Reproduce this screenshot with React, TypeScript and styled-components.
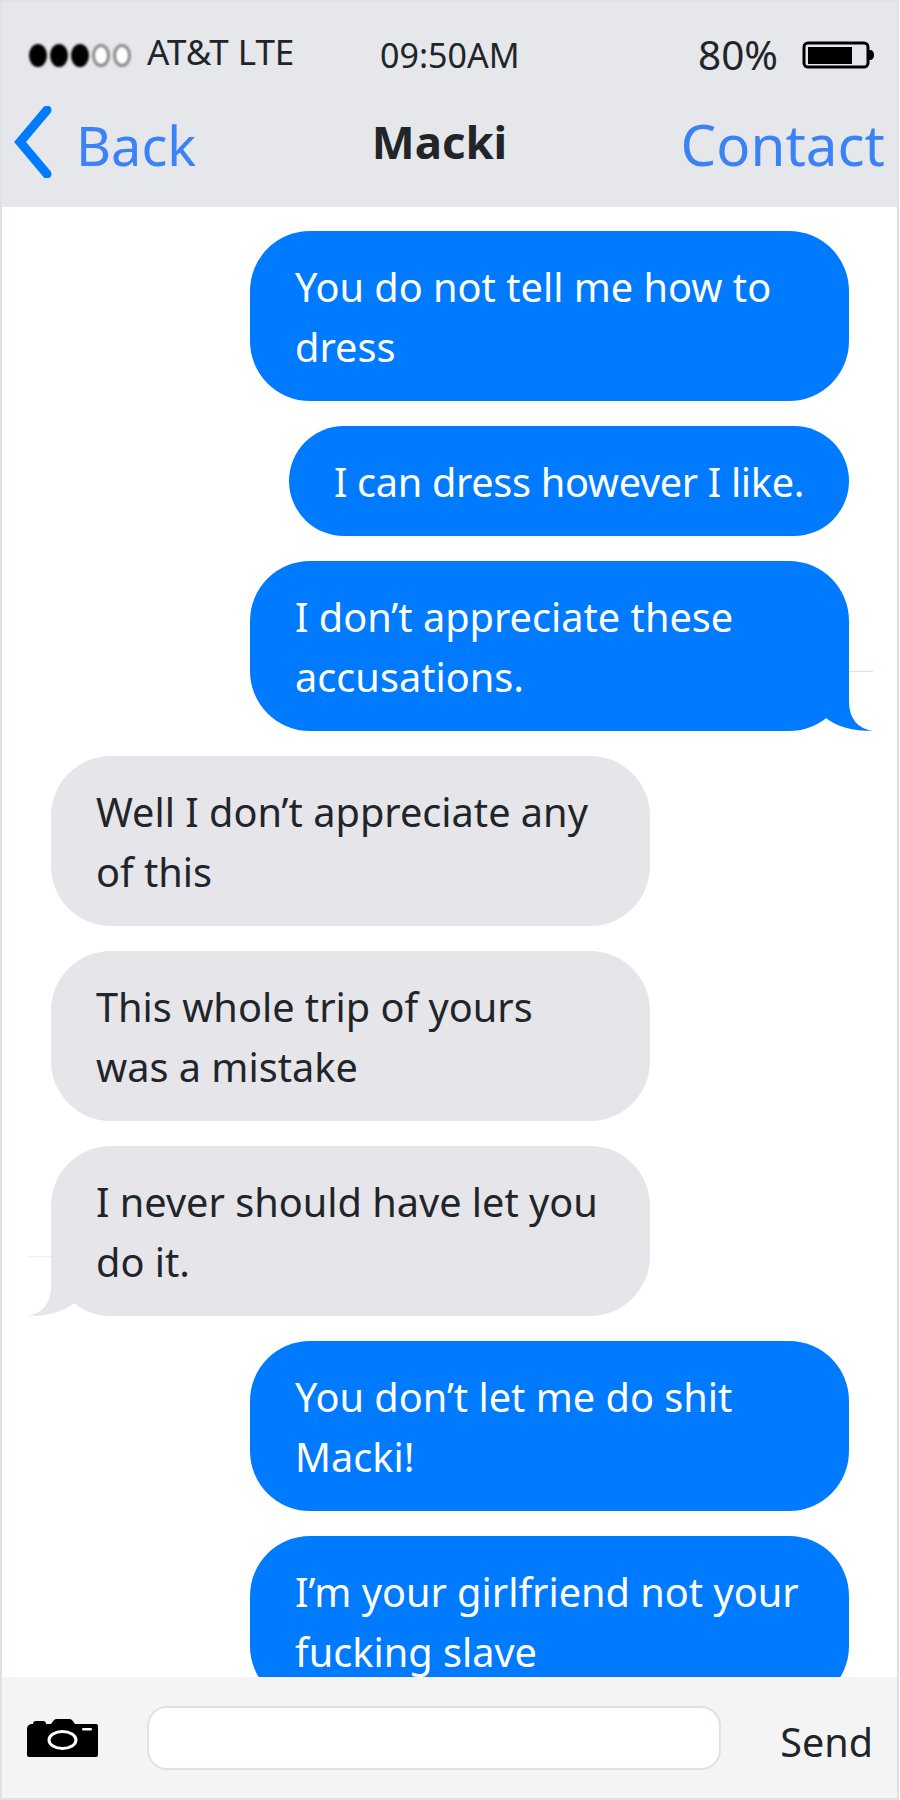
import styled, { createGlobalStyle } from 'styled-components';

const GlobalStyle = createGlobalStyle`
    html, body {
        margin: 0;
        padding: 0;
        background: #fff;
    }
    * {
        box-sizing: border-box;
    }
`;

const messages = [
    { id: 1, mine: true, text: 'You do not tell me how to dress' },
    { id: 2, mine: true, text: 'I can dress however I like.', short: true },
    { id: 3, mine: true, text: 'I don’t appreciate these accusations.', tail: true },
    { id: 4, mine: false, text: 'Well I don’t appreciate any of this' },
    { id: 5, mine: false, text: 'This whole trip of yours was a mistake' },
    { id: 6, mine: false, text: 'I never should have let you do it.', tail: true },
    { id: 7, mine: true, text: 'You don’t let me do shit Macki!' },
    { id: 8, mine: true, text: 'I’m your girlfriend not your fucking slave' },
];

function Tail({ mine }: { mine: boolean }) {
    return (
        <TailSvg $mine={mine} viewBox="0 0 60 60" width="60" height="60">
            <path d="M12 47 Q28 60 59 60 Q35 56 35 30 L35 0 Z" fill={mine ? '#007bff' : '#e5e5ea'} />
            <path d="M35 0.5 H59" stroke={mine ? '#cfe3fb' : '#f1f1f4'} strokeWidth="1" fill="none" />
        </TailSvg>
    );
}

function App() {
    return (
        <Phone>
            <GlobalStyle />
            <Header>
                <StatusBar>
                    <Carrier>
                        <Signal>
                            {[true, true, true, false, false].map((filled, i) => (
                                <Dot key={i} $filled={filled} />
                            ))}
                        </Signal>
                        <CarrierName>AT&amp;T LTE</CarrierName>
                    </Carrier>
                    <Clock>09:50AM</Clock>
                    <Power>
                        <Percent>80%</Percent>
                        <svg width="72" height="28" viewBox="0 0 72 28">
                            <rect x="2" y="2" width="64" height="24" rx="4" fill="none" stroke="#000" strokeWidth="3" />
                            <rect x="6" y="6" width="44" height="17" fill="#000" />
                            <path d="M67 9 H69 Q72 10 72 14 Q72 18 69 19 H67 Z" fill="#000" />
                        </svg>
                    </Power>
                </StatusBar>
                <NavBar>
                    <BackLink>
                        <svg width="38" height="72" viewBox="0 0 38 72">
                            <path d="M33 4 L6 36 L33 68" fill="none" stroke="#007bff" strokeWidth="9" strokeLinecap="round" strokeLinejoin="miter" />
                        </svg>
                        <BackLabel>Back</BackLabel>
                    </BackLink>
                    <Title>Macki</Title>
                    <ContactLink>Contact</ContactLink>
                </NavBar>
            </Header>
            <MessageList>
                {messages.map((m) => (
                    <Bubble key={m.id} $mine={m.mine} $short={m.short}>
                        {m.text}
                        {m.tail && <Tail mine={m.mine} />}
                    </Bubble>
                ))}
            </MessageList>
            <Composer>
                <svg width="72" height="38" viewBox="0 0 72 38">
                    <path
                        d="M1 10 Q1 6 5 5 L7 5 Q7 2 10 2 L17 2 Q20 2 20 5 L25 5 L28 1 Q29 0 31 0 L43 0 Q45 0 46 1 L49 5 L70 5 Q72 5 72 7 L72 36 Q72 38 70 38 L3 38 Q1 38 1 36 Z"
                        fill="#000"
                    />
                    <ellipse cx="36.500" cy="21" rx="13.500" ry="8.500" fill="none" stroke="#fff" strokeWidth="3" />
                    <rect x="56" y="9" width="10" height="2.500" rx="1.200" fill="#fff" />
                </svg>
                <MessageInput />
                <SendButton>Send</SendButton>
            </Composer>
        </Phone>
    );
}

export default App;

const Phone = styled.div`
    width: 899px;
    height: 1800px;
    display: flex;
    flex-direction: column;
    border: 2px solid #dee2e6;
    font-family: "Noto Sans", "Open Sans", sans-serif;
    color: #212529;
    overflow: hidden;
`;

const Header = styled.header`
    height: 205px;
    flex-shrink: 0;
    background: #e5e7eb;
    display: flex;
    flex-direction: column;
`;

const StatusBar = styled.div`
    height: 75px;
    display: grid;
    grid-template-columns: 351px 1fr auto;
    align-items: start;
    padding: 27px 23px 0 27px;
`;

const Carrier = styled.div`
    display: flex;
    align-items: center;
    gap: 16px;
`;

const Signal = styled.div`
    display: flex;
    gap: 3px;
    filter: blur(0.8px);
`;

const Dot = styled.span<{ $filled: boolean }>`
    width: 18px;
    height: 23px;
    border-radius: 50%;
    background: ${(p) => (p.$filled ? '#000' : '#fff')};
    border: ${(p) => (p.$filled ? 'none' : '3px solid #8a8a8a')};
    margin-top: 6px;
`;

const CarrierName = styled.span`
    font-size: 35px;
    line-height: 46px;
`;

const Clock = styled.span`
    font-size: 34px;
    line-height: 46px;
    margin-top: 3px;
`;

const Power = styled.div`
    display: flex;
    align-items: center;
    gap: 24px;
    margin-top: 3px;
`;

const Percent = styled.span`
    font-size: 40.500px;
    line-height: 46px;
`;

const NavBar = styled.nav`
    flex: 1;
    display: grid;
    grid-template-columns: 1fr auto 1fr;
    align-items: center;
    padding: 0 12px 0 12px;
`;

const BackLink = styled.a`
    display: flex;
    align-items: center;
    gap: 24px;
    color: #3b82f6;
`;

const BackLabel = styled.span`
    font-size: 54px;
    line-height: 70px;
    margin-top: 6px;
`;

const Title = styled.h1`
    margin: 0 20px 2px 0;
    font-size: 45.500px;
    line-height: 60px;
    font-weight: 700;
    color: #212529;
`;

const ContactLink = styled.a`
    justify-self: end;
    color: #3b82f6;
    font-size: 56.500px;
    line-height: 70px;
    margin-top: 6px;
`;

const MessageList = styled.main`
    flex: 1;
    min-height: 0;
    overflow: hidden;
    display: flex;
    flex-direction: column;
    gap: 25px;
    padding: 24px 48px 0 49px;
    background: #fff;
`;

const Bubble = styled.div<{ $mine: boolean; $short?: boolean }>`
    position: relative;
    flex-shrink: 0;
    width: ${(p) => (p.$short ? 'auto' : '599px')};
    align-self: ${(p) => (p.$mine ? 'flex-end' : 'flex-start')};
    padding: 26px 45px 24px;
    border-radius: 60px;
    font-size: 39.700px;
    line-height: 60px;
    letter-spacing: ${(p) => (p.$short ? '-0.33px' : 'normal')};
    background: ${(p) => (p.$mine ? '#007bff' : '#e5e5ea')};
    color: ${(p) => (p.$mine ? '#fff' : '#212529')};
`;

const TailSvg = styled.svg<{ $mine: boolean }>`
    position: absolute;
    bottom: 0;
    ${(p) => (p.$mine ? 'right: -25px;' : 'left: -25px; transform: scaleX(-1);')}
`;

const Composer = styled.footer`
    height: 121px;
    flex-shrink: 0;
    background: #f4f4f4;
    display: flex;
    align-items: center;
    padding: 0 24px 0 24px;
`;

const MessageInput = styled.div`
    width: 574px;
    height: 64px;
    margin: 0 0 0 49px;
    background: #fff;
    border: 2px solid #dee2e6;
    border-radius: 20px;
`;

const SendButton = styled.span`
    margin-left: auto;
    margin-top: 8px;
    font-size: 39.500px;
    line-height: 50px;
    color: #212529;
`;
